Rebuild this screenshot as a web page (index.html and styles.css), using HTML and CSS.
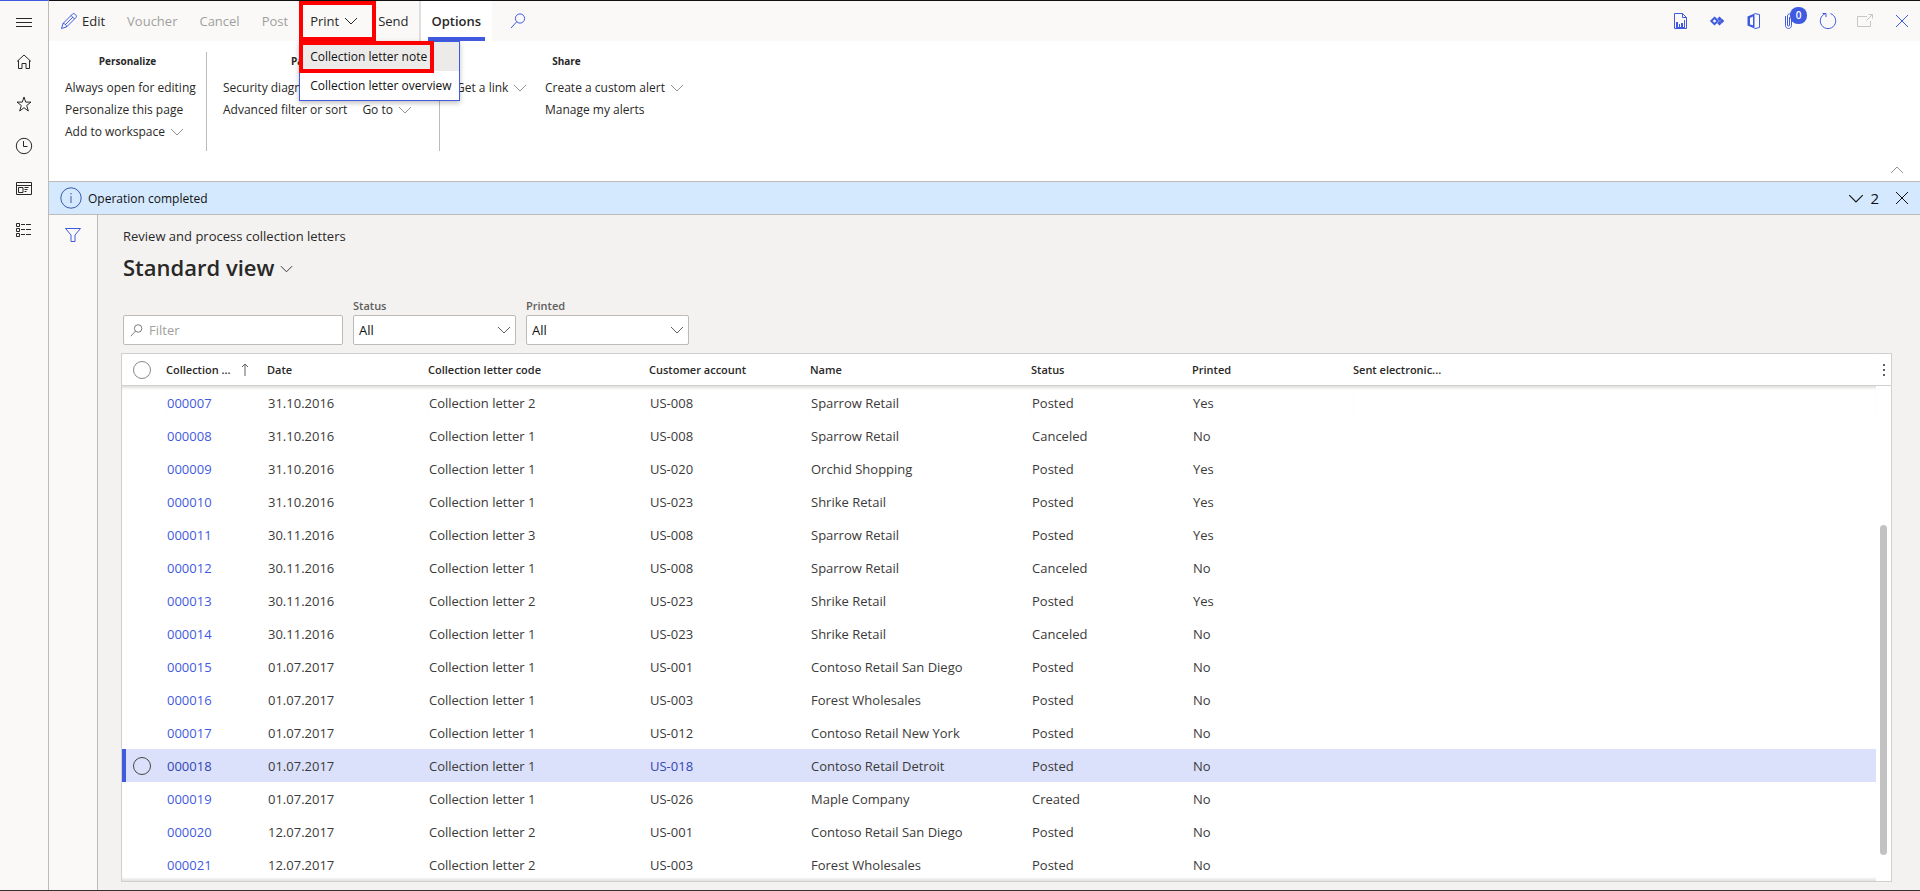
FILE: index.html
```html
<!DOCTYPE html>
<html lang="en">
<head>
<meta charset="utf-8">
<title>Review and process collection letters</title>
<link rel="stylesheet" href="styles.css">
</head>
<body>
<svg class="defs" aria-hidden="true">
  <symbol id="chev" viewBox="0 0 14 8"><path d="M1 1l6 6 6-6"/></symbol>
  <symbol id="x" viewBox="0 0 14 14"><path d="M1 1l12 12M13 1L1 13"/></symbol>
  <symbol id="search" viewBox="0 0 16 16"><circle cx="10" cy="5.5" r="4.6"/><path d="M6.7 8.8L1 15"/></symbol>
</svg>
<div class="app">
  <nav class="rail" aria-label="Navigation">
    <button aria-label="Expand"><svg viewBox="0 0 18 18"><path d="M1 4.5h16M1 8.5h16M1 12.5h16"/></svg></button>
    <button aria-label="Home"><svg viewBox="0 0 18 18"><path d="M2 8.5L9 2l7 6.500M3.500 7.500v8h3.500v-5h4v5h3.500v-8"/></svg></button>
    <button aria-label="Favorites"><svg viewBox="0 0 18 18"><path d="M9 2l1.700 5.100h5.300l-4.300 3.400 1.600 5.500L9 12.700 4.700 16l1.600-5.500L2 7.100h5.300z"/></svg></button>
    <button aria-label="Recent"><svg viewBox="0 0 18 18"><circle cx="9" cy="9" r="7.700"/><path d="M8.500 4v5.500h4"/></svg></button>
    <button aria-label="Workspaces"><svg viewBox="0 0 18 18"><path d="M1.500 3.500h15v12h-15zM1.500 6.500h15M3.500 8.500h4.500v5h-4.500zM9.500 8.500h4M9.500 10.500h3M9.500 12.500h2"/></svg></button>
    <button aria-label="Modules"><svg viewBox="0 0 18 18"><path d="M1.500 2.500h3v3h-3zM1.500 7.500h3v3h-3zM1.500 12.500h3v3h-3zM6 3.500h4M11 3.500h5M6 8.500h4M11 8.500h5M6 13.500h4M11 13.500h5"/></svg></button>
  </nav>
  <div class="main">
    <header class="actions">
      <button class="act edit"><svg viewBox="0 0 18 18"><path d="M1.500 16.500l1.500-5L12.500 2c1.500-1.500 5 1.500 3.500 3.500L6.500 15l-5 1.500zM3 11.500c2 0 3.500 1.500 3.500 3.500M11 3.500l3.500 3.500M5 13l8-8"/></svg>Edit</button>
      <button class="act" disabled>Voucher</button>
      <button class="act" disabled>Cancel</button>
      <button class="act" disabled>Post</button>
      <div class="print">
        <button class="act" aria-expanded="true">Print<svg class="chev"><use href="#chev"/></svg></button>
        <div class="menu" role="menu">
          <button class="on" role="menuitem">Collection letter note</button>
          <button role="menuitem">Collection letter overview</button>
        </div>
      </div>
      <button class="act send">Send</button>
      <button class="act tab">Options</button>
      <button class="act find" aria-label="Search"><svg><use href="#search"/></svg></button>
      <div class="tools">
        <button aria-label="Report"><svg viewBox="0 0 18 18"><path d="M3.500 1.500h8l4 4v11h-12zM11.500 1.500v4h4M5 15.500h9"/><path class="solid" d="M5 10h2v5h-2zM8 12h1v3h-1zM10 11h2v4h-2zM13 8h1v7h-1z"/></svg></button>
        <button aria-label="Power Apps"><svg viewBox="0 0 18 18"><path class="thick" d="M6.500 5.800L9.700 9 6.500 12.200 3.300 9z"/><path class="solid" d="M11.500 4.500l2.300 2.300-2.300 2.300-2.300-2.300zM11.500 9l2.300 2.300-2.300 2.300-2.300-2.300zM14 6.700L16.300 9 14 11.300 11.700 9z"/></svg></button>
        <button aria-label="Office"><svg viewBox="0 0 18 18"><path d="M9.500 1.500l5 1v13l-5 1.200"/><path class="solid" fill-rule="evenodd" d="M2.500 4.500L9.500 1.500v15l-7-3zM5 6v6.500l3 .8V4.500z"/></svg></button>
        <button aria-label="Attachments"><svg viewBox="0 0 18 18"><path d="M3.500 4v9.500c0 4 6 4 6 0V4c0-2.800-4-2.800-4 0v9c0 1.600 2 1.600 2 0V5"/></svg><span class="badge">0</span></button>
        <button aria-label="Refresh"><svg viewBox="0 0 18 18"><path d="M11.500 1.600a7.700 7.700 0 1 1-5 0M3.500 1.500h3.500v3.500"/></svg></button>
        <button aria-label="Open in new window" disabled><svg viewBox="0 0 18 18"><path d="M11 4.500H1.500v10h13V9M10.500 8.500l6-6M12.500 2.500h4v4"/></svg></button>
        <button aria-label="Close"><svg class="x"><use href="#x"/></svg></button>
      </div>
    </header>
    <section class="ribbon">
      <div class="group g1"><h2>Personalize</h2><div class="cols"><div>
        <button>Always open for editing</button><button>Personalize this page</button><button>Add to workspace<svg class="chev"><use href="#chev"/></svg></button></div></div></div>
      <div class="group g2"><h2>Page options</h2><div class="cols"><div>
        <button>Security diagnostics</button><button>Advanced filter or sort</button></div><div class="second"><button>&nbsp;</button><button>Go to<svg class="chev"><use href="#chev"/></svg></button></div></div></div>
      <div class="group g3"><h2>&nbsp;</h2><div class="cols"><div><button>Get a link<svg class="chev"><use href="#chev"/></svg></button></div></div></div>
      <div class="group g4"><h2>Share</h2><div class="cols"><div>
        <button>Create a custom alert<svg class="chev"><use href="#chev"/></svg></button><button>Manage my alerts</button></div></div></div>
      <button class="collapse" aria-label="Collapse"><svg class="chev up"><use href="#chev"/></svg></button>
    </section>
    <div class="message" role="status">
      <svg class="info" viewBox="0 0 22 22"><circle cx="11" cy="11" r="10.200"/><path d="M11 9v7M11 6v1.500"/></svg>
      <span class="note">Operation completed</span>
      <button class="count"><svg class="chev"><use href="#chev"/></svg>2</button>
      <button aria-label="Dismiss"><svg class="x"><use href="#x"/></svg></button>
    </div>
    <div class="work">
      <aside class="pane"><button aria-label="Filters"><svg viewBox="0 0 18 18"><path d="M1.500 2.500h15L11 9v6.500H7V9z"/></svg></button></aside>
      <main class="content">
        <p class="caption">Review and process collection letters</p>
        <h1>Standard view<svg class="chev"><use href="#chev"/></svg></h1>
        <div class="filters">
          <label class="quick"><svg><use href="#search"/></svg><input type="text" placeholder="Filter" aria-label="Filter"></label>
          <div class="field"><label for="st">Status</label><div class="pick"><select id="st"><option>All</option></select><svg class="chev"><use href="#chev"/></svg></div></div>
          <div class="field"><label for="pr">Printed</label><div class="pick"><select id="pr"><option>All</option></select><svg class="chev"><use href="#chev"/></svg></div></div>
        </div>
        <div class="grid">
          <div class="body">
          <table>
            <colgroup><col class="w45"><col class="w101"><col class="w161"><col class="w221"><col class="w161"><col class="w221"><col class="w161"><col class="w161"><col></colgroup>
            <thead><tr><th><input type="radio" name="row" aria-label="Select all"></th><th><span class="sorted">Collection ...<svg viewBox="0 0 10 14"><path d="M5 1v12M2 4l3-3 3 3"/></svg></span></th><th>Date</th><th>Collection letter code</th><th>Customer account</th><th>Name</th><th>Status</th><th>Printed</th><th>Sent electronic...</th></tr></thead>
            <tbody>
<tr><td></td><td><a href="#">000007</a></td><td>31.10.2016</td><td>Collection letter 2</td><td>US-008</td><td>Sparrow Retail</td><td>Posted</td><td>Yes</td><td></td></tr>
<tr><td></td><td><a href="#">000008</a></td><td>31.10.2016</td><td>Collection letter 1</td><td>US-008</td><td>Sparrow Retail</td><td>Canceled</td><td>No</td><td></td></tr>
<tr><td></td><td><a href="#">000009</a></td><td>31.10.2016</td><td>Collection letter 1</td><td>US-020</td><td>Orchid Shopping</td><td>Posted</td><td>Yes</td><td></td></tr>
<tr><td></td><td><a href="#">000010</a></td><td>31.10.2016</td><td>Collection letter 1</td><td>US-023</td><td>Shrike Retail</td><td>Posted</td><td>Yes</td><td></td></tr>
<tr><td></td><td><a href="#">000011</a></td><td>30.11.2016</td><td>Collection letter 3</td><td>US-008</td><td>Sparrow Retail</td><td>Posted</td><td>Yes</td><td></td></tr>
<tr><td></td><td><a href="#">000012</a></td><td>30.11.2016</td><td>Collection letter 1</td><td>US-008</td><td>Sparrow Retail</td><td>Canceled</td><td>No</td><td></td></tr>
<tr><td></td><td><a href="#">000013</a></td><td>30.11.2016</td><td>Collection letter 2</td><td>US-023</td><td>Shrike Retail</td><td>Posted</td><td>Yes</td><td></td></tr>
<tr><td></td><td><a href="#">000014</a></td><td>30.11.2016</td><td>Collection letter 1</td><td>US-023</td><td>Shrike Retail</td><td>Canceled</td><td>No</td><td></td></tr>
<tr><td></td><td><a href="#">000015</a></td><td>01.07.2017</td><td>Collection letter 1</td><td>US-001</td><td>Contoso Retail San Diego</td><td>Posted</td><td>No</td><td></td></tr>
<tr><td></td><td><a href="#">000016</a></td><td>01.07.2017</td><td>Collection letter 1</td><td>US-003</td><td>Forest Wholesales</td><td>Posted</td><td>No</td><td></td></tr>
<tr><td></td><td><a href="#">000017</a></td><td>01.07.2017</td><td>Collection letter 1</td><td>US-012</td><td>Contoso Retail New York</td><td>Posted</td><td>No</td><td></td></tr>
<tr class="sel"><td><input type="radio" name="row" aria-label="Select 000018"></td><td><a href="#">000018</a></td><td>01.07.2017</td><td>Collection letter 1</td><td><a href="#">US-018</a></td><td>Contoso Retail Detroit</td><td>Posted</td><td>No</td><td></td></tr>
<tr><td></td><td><a href="#">000019</a></td><td>01.07.2017</td><td>Collection letter 1</td><td>US-026</td><td>Maple Company</td><td>Created</td><td>No</td><td></td></tr>
<tr><td></td><td><a href="#">000020</a></td><td>12.07.2017</td><td>Collection letter 2</td><td>US-001</td><td>Contoso Retail San Diego</td><td>Posted</td><td>No</td><td></td></tr>
<tr><td></td><td><a href="#">000021</a></td><td>12.07.2017</td><td>Collection letter 2</td><td>US-003</td><td>Forest Wholesales</td><td>Posted</td><td>No</td><td></td></tr>
            </tbody>
          </table>
          </div>
          <div class="gutter"><button aria-label="Grid options"><i></i><i></i><i></i></button><div class="track"><div class="thumb"></div></div></div>
        </div>
      </main>
    </div>
  </div>
</div>
</body>
</html>
```
FILE: styles.css
```css
*, *::before, *::after { box-sizing: border-box; }
body { margin: 0; font: 13px/18px "Open Sans", "Noto Sans", sans-serif; color: #292827; background: #f3f2f1; }
h1, h2, p { margin: 0; }
button { font: inherit; color: inherit; background: none; border: 0; padding: 0; margin: 0; }
a { color: #3f5ae0; text-decoration: none; }
svg { fill: none; stroke: currentColor; width: 18px; height: 18px; flex: none; }
.defs { position: absolute; width: 0; height: 0; }
.chev { width: 14px; height: 8px; }
.x { width: 14px; height: 14px; }
.solid { fill: currentColor; stroke: none; }
.thick { stroke-width: 2; }

.app { display: flex; min-height: 100vh; border-bottom: 1px solid #33302c; }
.rail { width: 49px; border-top: 1px solid #3f5ae0; border-right: 1px solid #bdbbb9; background: #faf9f8; display: flex; flex-direction: column; }
.rail button { height: 42px; display: flex; align-items: center; justify-content: center; }
.rail button:first-child { height: 40px; padding-top: 3px; }
.main { flex: 1; min-width: 0; display: flex; flex-direction: column; border-top: 1px solid #111; }

.actions { height: 40px; display: flex; background: #faf9f8; padding-left: 1px; }
.act { height: 40px; padding: 0 11px; display: flex; align-items: center; white-space: nowrap; }
.act:disabled { color: #a19f9d; }
.edit { gap: 4px; padding-left: 10px; }
.edit svg, .find svg, .tools svg { color: #3f5ae0; }
.print { position: relative; width: 77px; outline: 4px solid #f00; outline-offset: -4px; }
.print .act { gap: 5px; width: 100%; }
.menu { position: absolute; z-index: 2; top: 40px; left: 0; width: 161px; border: 1px solid #3f5ae0; background: #fff; box-shadow: 0 2px 5px rgba(0,0,0,.25); font-size: 12px; }
.menu button { display: block; width: 100%; height: 29px; padding-left: 10px; text-align: left; white-space: nowrap; color: #111; }
.menu .on { background: #edebe9; position: relative; }
.menu .on::after { content: ""; position: absolute; left: -1px; top: -1px; width: 135px; height: 32px; border: 4px solid #f00; }
.send { padding: 0 10px 0 2px; }
.tab { position: relative; background: #fff; font-weight: 600; border-left: 2px solid #e1dfdd; }
.tab::after { content: ""; position: absolute; left: 7px; right: 7px; bottom: 0; height: 4px; background: #3f5ae0; }
.find { padding-left: 18px; }
.find svg { width: 16px; height: 16px; }
.tools { margin-left: auto; display: flex; }
.tools button { width: 37px; height: 40px; display: flex; align-items: center; justify-content: center; position: relative; }
.tools button:disabled svg { color: #c8c6c4; }
.badge { position: absolute; left: 18px; top: 6px; width: 17px; height: 17px; border-radius: 8px; background: #3f5ae0; color: #fff; font-size: 10px; line-height: 17px; text-align: center; font-weight: 600; }

.ribbon { display: flex; background: #fff; height: 141px; border-bottom: 1px solid #bdbbb9; padding-top: 11px; font-size: 12px; }
.ribbon h2 { font-size: 10px; line-height: 18px; font-weight: 700; text-align: center; }
.group { height: 99px; padding: 0 16px; }
.group button { display: flex; align-items: center; gap: 5px; height: 22px; white-space: nowrap; }
.group .chev, .collapse { color: #979593; }
.cols { display: flex; padding-top: 7px; }
.g1 { width: 158px; border-right: 1px solid #bdbbb9; }
.g2 { width: 233px; border-right: 1px solid #bdbbb9; }
.second { margin-left: 15px; }
.g3 { width: 105px; }
.g4 { width: 164px; padding: 0; }
.g4 h2 { width: 43px; }
.collapse { margin: auto 16px 6px auto; height: 14px; }
.up { transform: rotate(180deg); }

.message { display: flex; align-items: center; height: 33px; background: #d4e9fe; border-bottom: 1px solid #bdbbb9; padding: 0 11px; font-size: 12px; color: #111; }
.info { width: 22px; height: 22px; color: #3b5aaa; margin-right: 6px; }
.note { padding-top: 2px; }
.count { margin-left: auto; margin-right: 16px; display: flex; align-items: center; gap: 6px; font-size: 15px; }
.count .chev { width: 16px; height: 9px; }
.message .x { display: block; }

.work { flex: 1; display: flex; }
.pane { width: 49px; background: #faf9f8; border-right: 1px solid #bdbbb9; color: #3f5ae0; }
.pane button { width: 48px; height: 40px; display: flex; justify-content: center; align-items: center; }
.content { flex: 1; min-width: 0; padding: 12px 28px 8px 23px; display: flex; flex-direction: column; }
.caption { padding-left: 2px; }
h1 { font-size: 22px; line-height: 30px; font-weight: 600; padding-left: 2px; margin-top: 7px; display: flex; align-items: center; gap: 6px; }
h1 .chev { margin-top: 4px; width: 13px; }
.filters { display: flex; align-items: flex-end; gap: 10px; padding: 15px 0 8px 2px; }
.quick { width: 220px; height: 30px; display: flex; align-items: center; gap: 6px; padding: 0 6px; border: 1px solid #bdbbb9; border-radius: 2px; background: #fff; }
.quick svg { width: 13px; height: 13px; color: #605e5c; }
.quick input { font: inherit; border: 0; outline: 0; width: 100%; padding: 0; background: none; }
.quick input::placeholder { color: #a19f9d; }
.field { width: 163px; }
.field label { display: block; color: #605e5c; font-weight: 600; font-size: 11px; line-height: 18px; }
.pick { position: relative; }
.pick select { appearance: none; width: 100%; height: 30px; display: block; border: 1px solid #bdbbb9; border-radius: 2px; background: #fff; font: inherit; padding: 0 5px; color: #111; }
.pick .chev { position: absolute; right: 5px; top: 11px; color: #605e5c; }

.grid { flex: 1; display: flex; border: 1px solid #d2d0ce; background: #fff; }
.body { flex: 1; min-width: 0; box-shadow: inset 0 -4px 3px -2px #e1dfdd; }
table { width: 100%; table-layout: fixed; border-collapse: separate; border-spacing: 0; }
.w45 { width: 44px; } .w101 { width: 101px; } .w161 { width: 161px; } .w221 { width: 221px; }
th { height: 32px; border-bottom: 1px solid #d2d0ce; font-size: 11px; font-weight: 600; text-align: left; padding: 0; white-space: nowrap; }
td { height: 33px; padding: 0 0 0 1px; white-space: nowrap; color: #3b3a39; }
th:first-child, td:first-child { padding-left: 11px; }
tbody tr:first-child td { box-shadow: inset 0 4px 3px -2px #e1dfdd; }
.sorted { display: flex; align-items: center; gap: 9px; }
.sorted svg { width: 10px; height: 14px; color: #605e5c; }
input[type=radio] { appearance: none; display: block; width: 18px; height: 18px; margin: 0; border: 1px solid #8a8886; border-radius: 50%; background: none; }
.sel input[type=radio] { border-color: #484644; }
.sel td { background: #dbe1fb; }
.sel td:first-child { box-shadow: inset 4px 0 #3f5ae0; }
.sel a { color: #3346b5; }
.gutter { width: 15px; display: flex; flex-direction: column; }
.gutter button { height: 32px; border-bottom: 1px solid #d2d0ce; display: flex; flex-direction: column; align-items: center; justify-content: center; gap: 3px; }
.gutter i { width: 2px; height: 2px; background: #605e5c; }
.track { flex: 1; padding: 139px 4px 26px; display: flex; }
.thumb { width: 7px; border-radius: 4px; background: #c2c2c2; }
```
